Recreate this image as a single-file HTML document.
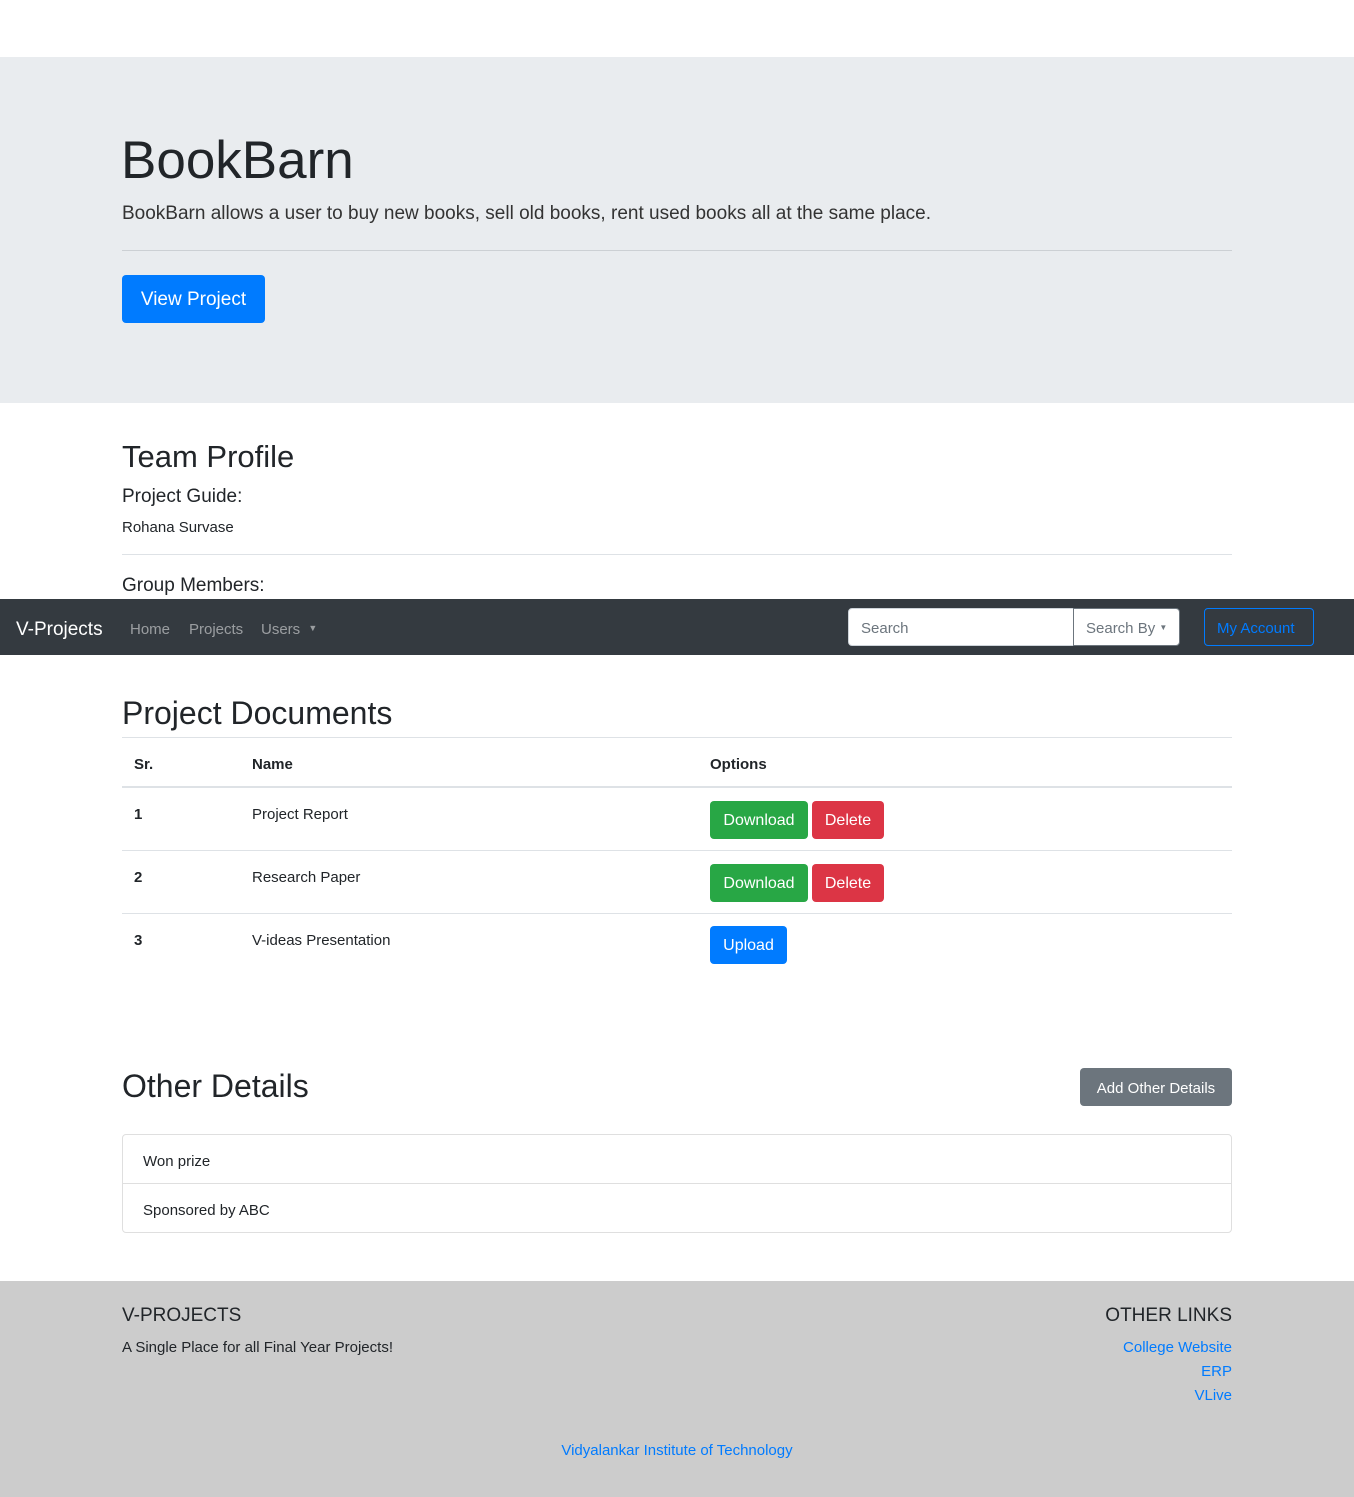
<!DOCTYPE html>
<html><head><meta charset="utf-8"><style>
*{margin:0;padding:0;box-sizing:border-box}
body{width:1354px;height:1497px;position:relative;background:#fff;font-family:"Liberation Sans","DejaVu Sans",sans-serif;color:#212529;overflow:hidden}
.a{position:absolute;white-space:nowrap}
.btn{position:absolute;color:#fff;border-radius:4px;font-size:16px;display:flex;align-items:center;justify-content:center;padding-top:2px}
.hr{position:absolute;left:122px;width:1110px;height:1px;background:#dee2e6}
a{color:#007bff;text-decoration:none}
</style></head><body>
<div class="a" style="left:0;top:57px;width:1354px;height:346px;background:#e9ecef"></div>
<div class="a" style="left:121px;top:126px;font-size:53px;line-height:70px;color:#212529">BookBarn</div>
<div class="a" style="left:122px;top:202px;font-size:19px;line-height:24px;color:#333">BookBarn allows a user to buy new books, sell old books, rent used books all at the same place.</div>
<div class="hr" style="top:250px;background:#ccd0d4"></div>
<div class="btn" style="left:122px;top:275px;width:143px;height:48px;background:#007bff;font-size:19px">View Project</div>

<div class="a" style="left:122px;top:437px;font-size:31px;line-height:40px">Team Profile</div>
<div class="a" style="left:122px;top:485px;font-size:19px;line-height:24px">Project Guide:</div>
<div class="a" style="left:122px;top:518px;font-size:15px;line-height:20px">Rohana Survase</div>
<div class="hr" style="top:554px"></div>
<div class="a" style="left:122px;top:574px;font-size:19px;line-height:24px">Group Members:</div>

<div class="a" style="left:0;top:599px;width:1354px;height:56px;background:#343a40"></div>
<div class="a" style="left:16px;top:618px;font-size:19px;line-height:24px;color:#fff">V-Projects</div>
<div class="a" style="left:130px;top:620px;font-size:15px;line-height:20px;color:rgba(255,255,255,.5)">Home</div>
<div class="a" style="left:189px;top:620px;font-size:15px;line-height:20px;color:rgba(255,255,255,.5)">Projects</div>
<div class="a" style="left:261px;top:620px;font-size:15px;line-height:20px;color:rgba(255,255,255,.5)">Users <span style="font-size:9px;position:relative;top:-3px;margin-left:4px">▼</span></div>
<div class="a" style="left:848px;top:608px;width:226px;height:38px;background:#fff;border:1px solid #ced4da;border-radius:4px 0 0 4px;font-size:15px;color:#6c757d;padding:11px 12px 0">Search</div>
<div class="a" style="left:1073px;top:608px;width:107px;height:38px;background:#fff;border:1px solid #6c757d;border-radius:0 4px 4px 0;font-size:15px;color:#6c757d;padding:11px 12px 0">Search By <span style="font-size:8px;position:relative;top:-3px">▼</span></div>
<div class="a" style="left:1204px;top:608px;width:110px;height:38px;border:1px solid #007bff;border-radius:4px;font-size:15px;color:#007bff;padding:11px 12px 0">My Account</div>

<div class="a" style="left:122px;top:692px;font-size:32px;line-height:42px">Project Documents</div>
<div class="hr" style="top:737px"></div>
<div class="a" style="left:134px;top:755px;font-size:15px;font-weight:bold;line-height:20px">Sr.</div>
<div class="a" style="left:252px;top:755px;font-size:15px;font-weight:bold;line-height:20px">Name</div>
<div class="a" style="left:710px;top:755px;font-size:15px;font-weight:bold;line-height:20px">Options</div>
<div class="hr" style="top:786px;height:2px"></div>
<div class="a" style="left:134px;top:805px;font-size:15px;font-weight:bold;line-height:20px">1</div>
<div class="a" style="left:252px;top:805px;font-size:15px;line-height:20px">Project Report</div>
<div class="btn" style="left:710px;top:801px;width:98px;height:38px;background:#28a745">Download</div>
<div class="btn" style="left:812px;top:801px;width:72px;height:38px;background:#dc3545">Delete</div>
<div class="hr" style="top:850px"></div>
<div class="a" style="left:134px;top:868px;font-size:15px;font-weight:bold;line-height:20px">2</div>
<div class="a" style="left:252px;top:868px;font-size:15px;line-height:20px">Research Paper</div>
<div class="btn" style="left:710px;top:864px;width:98px;height:38px;background:#28a745">Download</div>
<div class="btn" style="left:812px;top:864px;width:72px;height:38px;background:#dc3545">Delete</div>
<div class="hr" style="top:913px"></div>
<div class="a" style="left:134px;top:931px;font-size:15px;font-weight:bold;line-height:20px">3</div>
<div class="a" style="left:252px;top:931px;font-size:15px;line-height:20px">V-ideas Presentation</div>
<div class="btn" style="left:710px;top:926px;width:77px;height:38px;background:#007bff">Upload</div>

<div class="a" style="left:122px;top:1065px;font-size:32px;line-height:42px">Other Details</div>
<div class="btn" style="left:1080px;top:1068px;width:152px;height:38px;background:#6c757d;font-size:15px">Add Other Details</div>
<div class="a" style="left:122px;top:1134px;width:1110px;height:99px;border:1px solid #dfdfdf;border-radius:4px"></div>
<div class="hr" style="top:1183px;background:#dfdfdf"></div>
<div class="a" style="left:143px;top:1152px;font-size:15px;line-height:20px">Won prize</div>
<div class="a" style="left:143px;top:1201px;font-size:15px;line-height:20px">Sponsored by ABC</div>

<div class="a" style="left:0;top:1281px;width:1354px;height:216px;background:#ccc"></div>
<div class="a" style="left:122px;top:1304px;font-size:19px;line-height:24px">V-PROJECTS</div>
<div class="a" style="left:122px;top:1338px;font-size:15px;line-height:20px">A Single Place for all Final Year Projects!</div>
<div class="a" style="right:122px;top:1304px;font-size:19px;line-height:24px;text-align:right">OTHER LINKS</div>
<div class="a" style="right:122px;top:1336px;font-size:15px;line-height:24px;text-align:right"><a>College Website</a><br><a>ERP</a><br><a>VLive</a></div>
<div class="a" style="left:0;width:1354px;top:1441px;font-size:15px;line-height:20px;text-align:center"><a>Vidyalankar Institute of Technology</a></div>
</body></html>
